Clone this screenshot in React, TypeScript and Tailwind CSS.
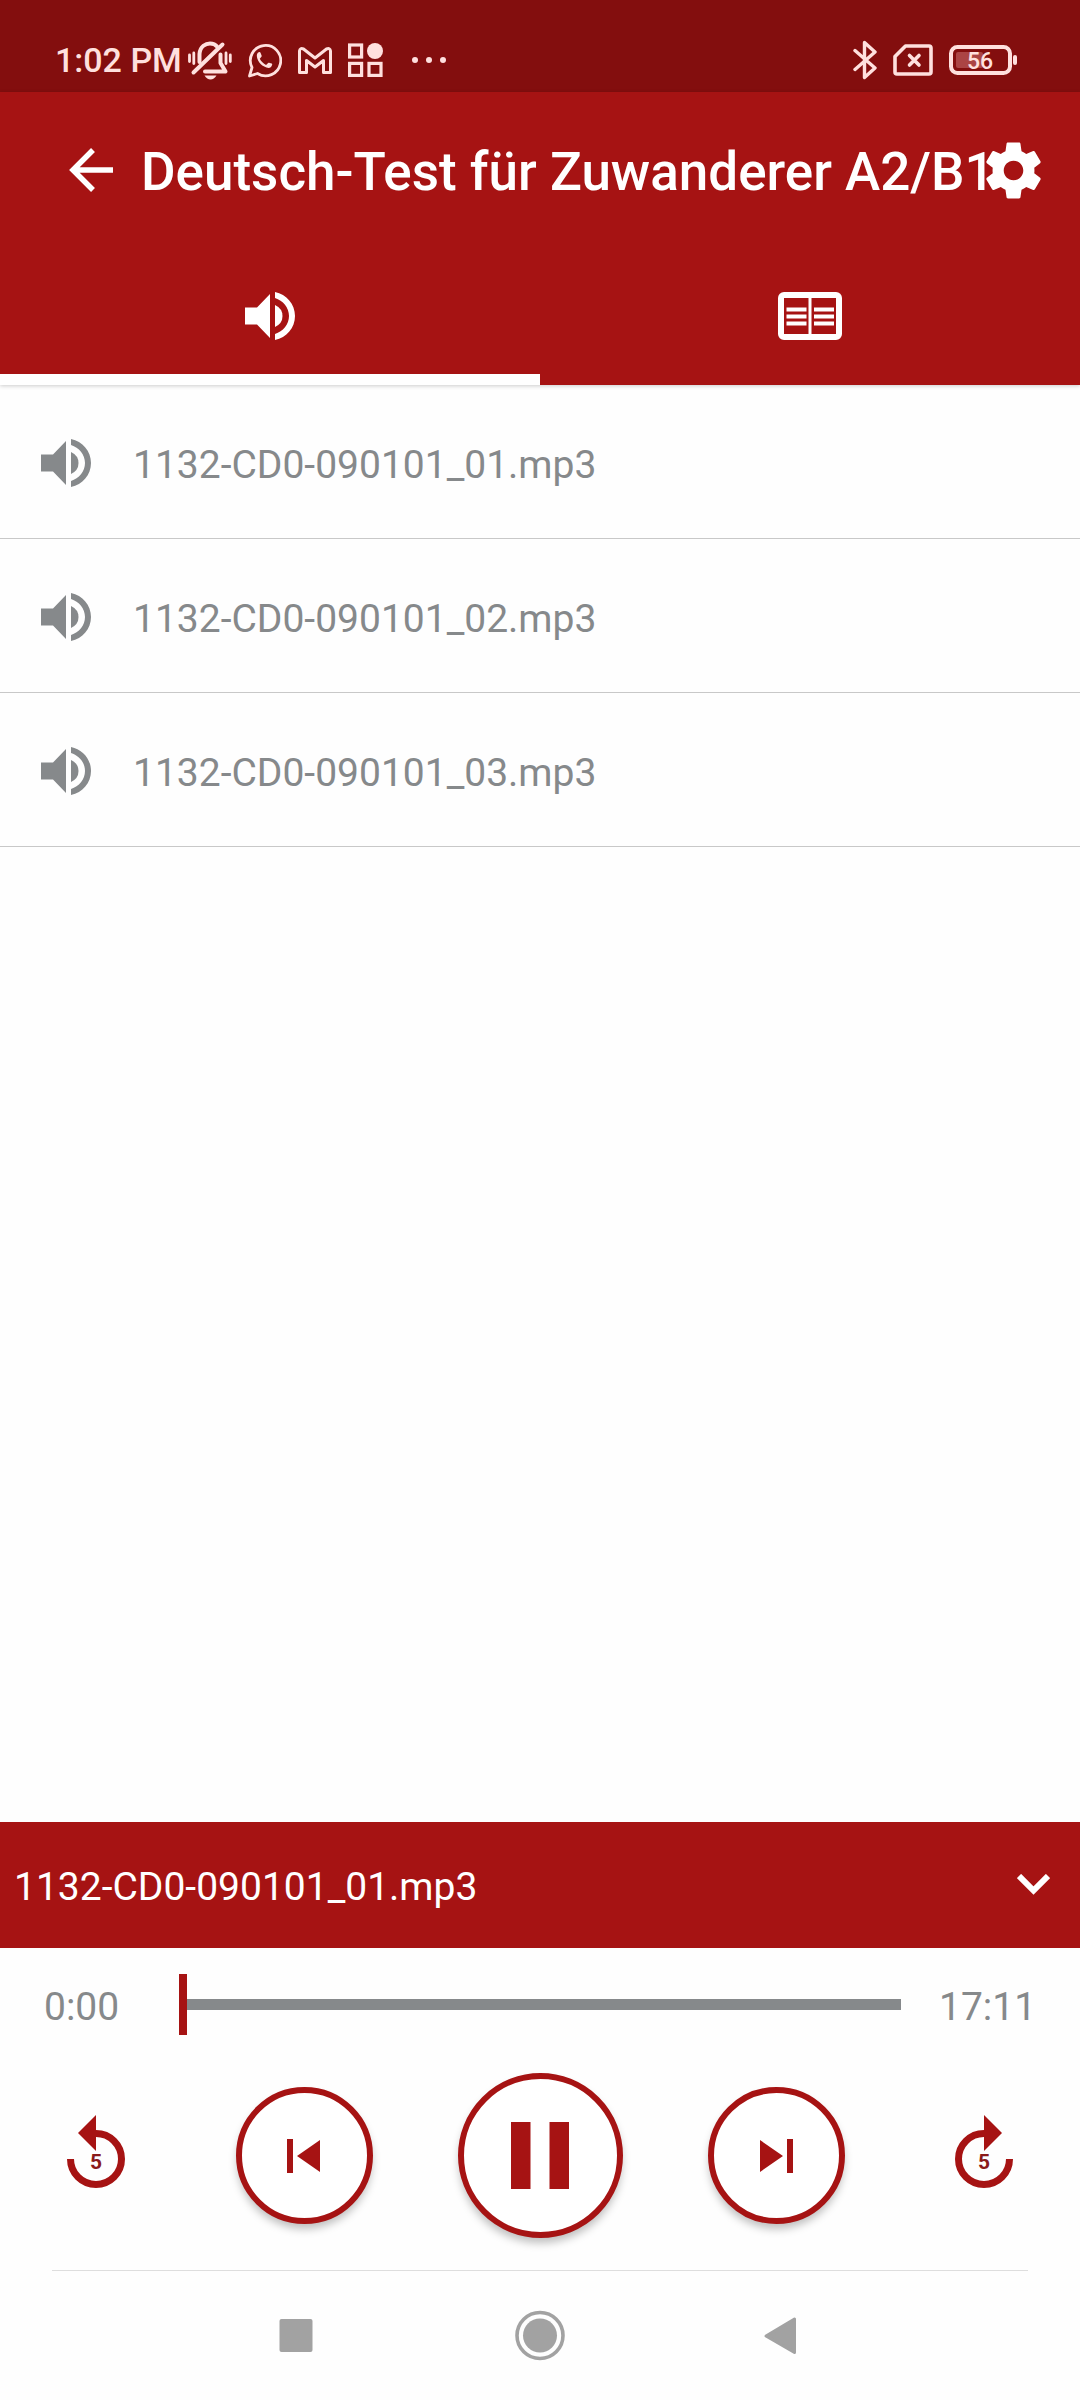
import React from "react";

const tracks = ["1132-CD0-090101_01.mp3", "1132-CD0-090101_02.mp3", "1132-CD0-090101_03.mp3"];

function VolumeIcon() {
  return (
    <svg width="50" height="48" viewBox="0 0 50 48" fill="currentColor" aria-hidden="true">
      <path d="M0 15.5H12L25 2V46L12 32.500H0Z" />
      <path d="M30 13Q37.500 16.500 37.500 24T30 35Z" />
      <path d="M30 0C41.500 2.500 50 12 50 24S41.500 45.500 30 48V42C38 39.500 44 32.500 44 24S38 8.500 30 6Z" />
    </svg>
  );
}

function BookIcon() {
  return (
    <svg width="64" height="48" viewBox="0 0 64 48" fill="currentColor" aria-hidden="true">
      <rect x="3" y="3" width="58" height="42" rx="3" fill="none" stroke="currentColor" strokeWidth="6" />
      <rect x="30.500" y="4" width="3" height="40" />
      <path d="M8.500 15.500h20v4h-20zM8.500 22.500h20v4h-20zM8.500 29.500h20v4h-20zM36 15.500h20v4H36zM36 22.500h20v4H36zM36 29.500h20v4H36z" />
    </svg>
  );
}

function BellOffIcon() {
  return (
    <svg width="44" height="40" viewBox="0 0 44 40" fill="none" stroke="currentColor" strokeLinecap="round" aria-hidden="true">
      <path d="M11.500 22V14C12 6 18 3.500 22 3.500C25 3.500 27.500 4.500 29 6.500" strokeWidth="4" />
      <path d="M5.500 32.500L34.500 4.500" strokeWidth="4" />
      <path d="M32.500 14.500V23L37.500 31.500H17" strokeWidth="4" strokeLinejoin="round" />
      <path d="M16.500 35.500H28.500Q26 39.500 22.500 39.500T16.500 35.500Z" fill="currentColor" stroke="none" />
      <path d="M1.500 15V21.500M5.800 13V23.500M38 13V23.500M42.300 15V21.500" strokeWidth="2.800" />
    </svg>
  );
}

function WhatsAppIcon() {
  return (
    <svg width="34" height="36" viewBox="0 0 34 36" fill="none" aria-hidden="true">
      <path d="M1.500 34L4 25.500A15.200 15.200 0 1 1 9.500 31.500Z" stroke="currentColor" strokeWidth="2.800" strokeLinejoin="round" />
      <path
        transform="translate(5.500 6.500) scale(.95)"
        fill="currentColor"
        d="M6.620 10.790c1.440 2.830 3.760 5.140 6.590 6.590l2.200-2.200c.27-.27.67-.36 1.020-.24 1.120.37 2.330.57 2.570.77.55.4.900.85.600 1.500C19 20 17.500 20.500 16 20.500 9.500 20 4 14 3.500 8c0-2 .5-3.300 2-4 .8-.4 1.500-.2 1.900.6l1.200 2.970c.11.35.03.74-.25 1.020l-1.730 2.200z"
      />
    </svg>
  );
}

function MailIcon() {
  return (
    <svg width="34" height="27" viewBox="0 0 34 27" fill="none" stroke="currentColor" strokeWidth="3" strokeLinejoin="round" aria-hidden="true">
      <path d="M1.500 25.500V4Q2 .5 5.500 2L17 11L28.500 2Q32 .5 32.500 4V25.500H25.500V13.500L17 20L8.500 13.500V25.500Z" />
    </svg>
  );
}

function AppsIcon() {
  return (
    <svg width="35" height="34" viewBox="0 0 35 34" fill="none" stroke="currentColor" strokeWidth="3.200" aria-hidden="true">
      <rect x="1.600" y="2" width="12" height="12" />
      <rect x="1.600" y="20.400" width="12" height="12" />
      <rect x="21" y="20.400" width="12" height="12" />
      <circle cx="27" cy="8" r="8" fill="currentColor" stroke="none" />
    </svg>
  );
}

function BluetoothIcon() {
  return (
    <svg width="24" height="40" viewBox="0 0 24 40" fill="none" stroke="currentColor" strokeWidth="3.400" strokeLinecap="round" strokeLinejoin="round" aria-hidden="true">
      <path d="M2 10.500L22 28L11.500 37.500V2.500L22 12L2 29.500" />
    </svg>
  );
}

function NoSimIcon() {
  return (
    <svg width="40" height="32" viewBox="0 0 40 32" fill="none" stroke="currentColor" strokeWidth="3.600" strokeLinecap="round" strokeLinejoin="round" aria-hidden="true">
      <path d="M12.500 2H36Q38 2 38 4V28Q38 30 36 30H4Q2 30 2 28V12.500Z" />
      <path d="M16.500 11.500L26 21M26 11.500L16.500 21" />
    </svg>
  );
}

function BatteryIcon() {
  return (
    <svg width="68" height="30" viewBox="0 0 68 30" role="img" aria-label="Battery 56 percent">
      <rect x="2" y="2" width="59" height="26" rx="6.500" fill="none" stroke="currentColor" strokeWidth="4" />
      <rect x="7" y="7" width="27" height="16" rx="2" fill="#ab4444" />
      <rect x="64" y="10" width="4" height="10" rx="2" fill="currentColor" />
      <text x="31" y="23.500" textAnchor="middle" fontSize="23" fontWeight="500" fill="currentColor" fontFamily="Roboto, sans-serif">
        56
      </text>
    </svg>
  );
}

function SkipFive({ forward }: { forward?: boolean }) {
  return (
    <button type="button" aria-label={forward ? "Forward 5 seconds" : "Back 5 seconds"} className="shrink-0">
      <svg width="58" height="82" viewBox="0 0 58 82" className="block" aria-hidden="true">
        <g transform={forward ? "matrix(-1 0 0 1 58 0)" : undefined}>
          <path d="M29 0V36L11 18Z" fill="#a61313" />
          <path d="M29 18.500A25.500 25.500 0 1 1 3.500 44" fill="none" stroke="#a61313" strokeWidth="7" />
        </g>
        <text x="29" y="54" textAnchor="middle" fontSize="21" fontWeight="700" fill="#8a1a1a" fontFamily="Roboto, sans-serif">
          5
        </text>
      </svg>
    </button>
  );
}

function TrackButton({ next }: { next?: boolean }) {
  return (
    <button
      type="button"
      aria-label={next ? "Next track" : "Previous track"}
      className="flex size-[137px] items-center justify-center rounded-full border-[6px] border-[#a61313] bg-white shadow-[0_6px_8px_-1px_rgba(0,0,0,0.25)]"
    >
      <svg width="34" height="34" viewBox="0 0 34 34" fill="#a61313" aria-hidden="true">
        <path d={next ? "M1 1L24 17L1 33ZM28 0h6v34h-6z" : "M33 1L10 17L33 33ZM0 0h6v34h-6z"} />
      </svg>
    </button>
  );
}

export default function App() {
  return (
    <div className="flex min-h-screen flex-col bg-[#fefefe] font-[Roboto,sans-serif]">
      <div className="flex h-[92px] items-center justify-between bg-[#830e0e] pt-7 pr-[63px] pl-[55px] text-[#ffe0de]">
        <div className="flex items-center gap-4">
          <span className="-mr-[10px] text-[34px] leading-10 font-medium whitespace-nowrap">1:02 PM</span>
          <BellOffIcon />
          <WhatsAppIcon />
          <MailIcon />
          <AppsIcon />
          <svg width="60" height="8" viewBox="0 0 60 8" fill="currentColor" aria-hidden="true">
            <circle cx="16" cy="4" r="3" />
            <circle cx="30" cy="4" r="3" />
            <circle cx="44" cy="4" r="3" />
          </svg>
        </div>
        <div className="flex items-center gap-4">
          <BluetoothIcon />
          <NoSimIcon />
          <BatteryIcon />
        </div>
      </div>

      <header className="relative z-10 bg-[#a61313] text-white shadow-[0_1px_4px_rgba(0,0,0,0.2)]">
        <div className="flex h-[156px] items-center pr-[33px] pl-[69px]">
          <button type="button" aria-label="Back" className="mr-7 shrink-0">
            <svg width="44" height="44" viewBox="0 0 44 44" fill="none" stroke="currentColor" strokeWidth="5.500" className="block" aria-hidden="true">
              <path d="M44 22H4M24 2L4 22L24 42" />
            </svg>
          </button>
          <h1 className="min-w-0 flex-1 pt-1 text-[53px] leading-[64px] font-medium whitespace-nowrap">Deutsch-Test für Zuwanderer A2/B1</h1>
          <button type="button" aria-label="Settings" className="shrink-0">
            <svg width="67" height="67" viewBox="0 0 24 24" fill="currentColor" className="block" aria-hidden="true">
              <path d="M19.430 12.980c.04-.32.07-.64.07-.98s-.03-.66-.07-.98l2.110-1.650c.19-.15.24-.42.12-.64l-2-3.460c-.12-.22-.39-.3-.61-.22l-2.490 1c-.52-.4-1.080-.73-1.690-.98l-.38-2.650C14.460 2.180 14.250 2 14 2h-4c-.25 0-.46.18-.49.42l-.38 2.650c-.61.25-1.170.59-1.690.98l-2.490-1c-.23-.09-.49 0-.61.22l-2 3.460c-.13.22-.07.49.12.64l2.110 1.650c-.04.32-.07.65-.07.98s.03.66.07.98l-2.110 1.650c-.19.15-.24.42-.12.64l2 3.460c.12.22.39.3.61.22l2.490-1c.52.4 1.080.73 1.690.98l.38 2.650c.03.24.24.42.49.42h4c.25 0 .46-.18.49-.42l.38-2.650c.61-.25 1.170-.59 1.690-.98l2.490 1c.23.09.49 0 .61-.22l2-3.460c.12-.22.07-.49-.12-.64l-2.110-1.650zM12 15.500c-1.930 0-3.500-1.570-3.500-3.500s1.570-3.500 3.500-3.500 3.500 1.570 3.500 3.500-1.570 3.500-3.500 3.500z" />
            </svg>
          </button>
        </div>
        <div role="tablist" className="grid h-[137px] grid-cols-2">
          <button type="button" role="tab" aria-selected="true" aria-label="Audio" className="flex items-center justify-center border-b-[11px] border-white pt-[9px]">
            <VolumeIcon />
          </button>
          <button type="button" role="tab" aria-selected="false" aria-label="Book" className="flex items-center justify-center pb-[2px]">
            <BookIcon />
          </button>
        </div>
      </header>

      <main className="flex-1">
        <ul>
          {tracks.map((name) => (
            <li key={name} className="border-b border-[#c8c8c8]">
              <button type="button" className="flex h-[153px] w-full items-center gap-[42px] pt-[2px] pl-[41px] text-left text-[39px] leading-[48px] text-[#86898b]">
                <VolumeIcon />
                <span className="pt-1">{name}</span>
              </button>
            </li>
          ))}
        </ul>
      </main>

      <section aria-label="Player">
        <div className="flex h-[126px] items-center justify-between bg-[#a61313] pr-[30px] pl-[14px] text-[39px] leading-[48px] text-white">
          <span className="pt-1">{tracks[0]}</span>
          <button type="button" aria-label="Collapse player">
            <svg width="33" height="22" viewBox="0 0 33 22" fill="none" stroke="currentColor" strokeWidth="6" className="block" aria-hidden="true">
              <path d="M2 2L16.500 16.500L31 2" />
            </svg>
          </button>
        </div>

        <div className="flex h-[113px] items-center text-[39px] leading-[48px] text-[#86898b]">
          <span className="w-[179px] pt-1 pl-11">0:00</span>
          <input
            type="range"
            min={0}
            max={1031}
            defaultValue={0}
            aria-label="Position"
            className="h-[61px] min-w-0 flex-1 appearance-none bg-transparent [&::-webkit-slider-runnable-track]:h-[11px] [&::-webkit-slider-runnable-track]:bg-[#86898b] [&::-webkit-slider-thumb]:-mt-[25px] [&::-webkit-slider-thumb]:h-[61px] [&::-webkit-slider-thumb]:w-2 [&::-webkit-slider-thumb]:appearance-none [&::-webkit-slider-thumb]:bg-[#a61313]"
          />
          <span className="w-[179px] pt-1 pl-[38px]">17:11</span>
        </div>

        <div className="flex items-center justify-between px-[67px] pt-3 pb-8">
          <SkipFive />
          <div className="flex items-center gap-[85px]">
            <TrackButton />
            <button
              type="button"
              aria-label="Pause"
              className="flex size-[165px] items-center justify-center rounded-full border-[6px] border-[#a61313] bg-white shadow-[0_6px_8px_-1px_rgba(0,0,0,0.25)]"
            >
              <svg width="58" height="67" viewBox="0 0 58 67" fill="#a61313" aria-hidden="true">
                <path d="M0 0h19.500v67H0zM38.500 0H58v67H38.500z" />
              </svg>
            </button>
            <TrackButton next />
          </div>
          <SkipFive forward />
        </div>
      </section>

      <nav aria-label="System" className="mx-[52px] flex h-[130px] items-center justify-center gap-[164px] border-t border-[#dedede] text-[#a2a2a2]">
        <button type="button" aria-label="Recent apps">
          <svg width="80" height="56" viewBox="0 0 80 56" fill="currentColor" className="block" aria-hidden="true">
            <rect x="23.500" y="11" width="33" height="33" rx="2" />
          </svg>
        </button>
        <button type="button" aria-label="Home">
          <svg width="80" height="56" viewBox="0 0 80 56" fill="currentColor" className="block" aria-hidden="true">
            <circle cx="40" cy="27.500" r="17" />
            <circle cx="40" cy="27.500" r="23" fill="none" stroke="currentColor" strokeWidth="3.600" />
          </svg>
        </button>
        <button type="button" aria-label="Back">
          <svg width="80" height="56" viewBox="0 0 80 56" fill="currentColor" stroke="currentColor" strokeWidth="3" strokeLinejoin="round" className="block" aria-hidden="true">
            <path d="M22 28L50.500 11V44.500Z" />
          </svg>
        </button>
      </nav>
    </div>
  );
}
